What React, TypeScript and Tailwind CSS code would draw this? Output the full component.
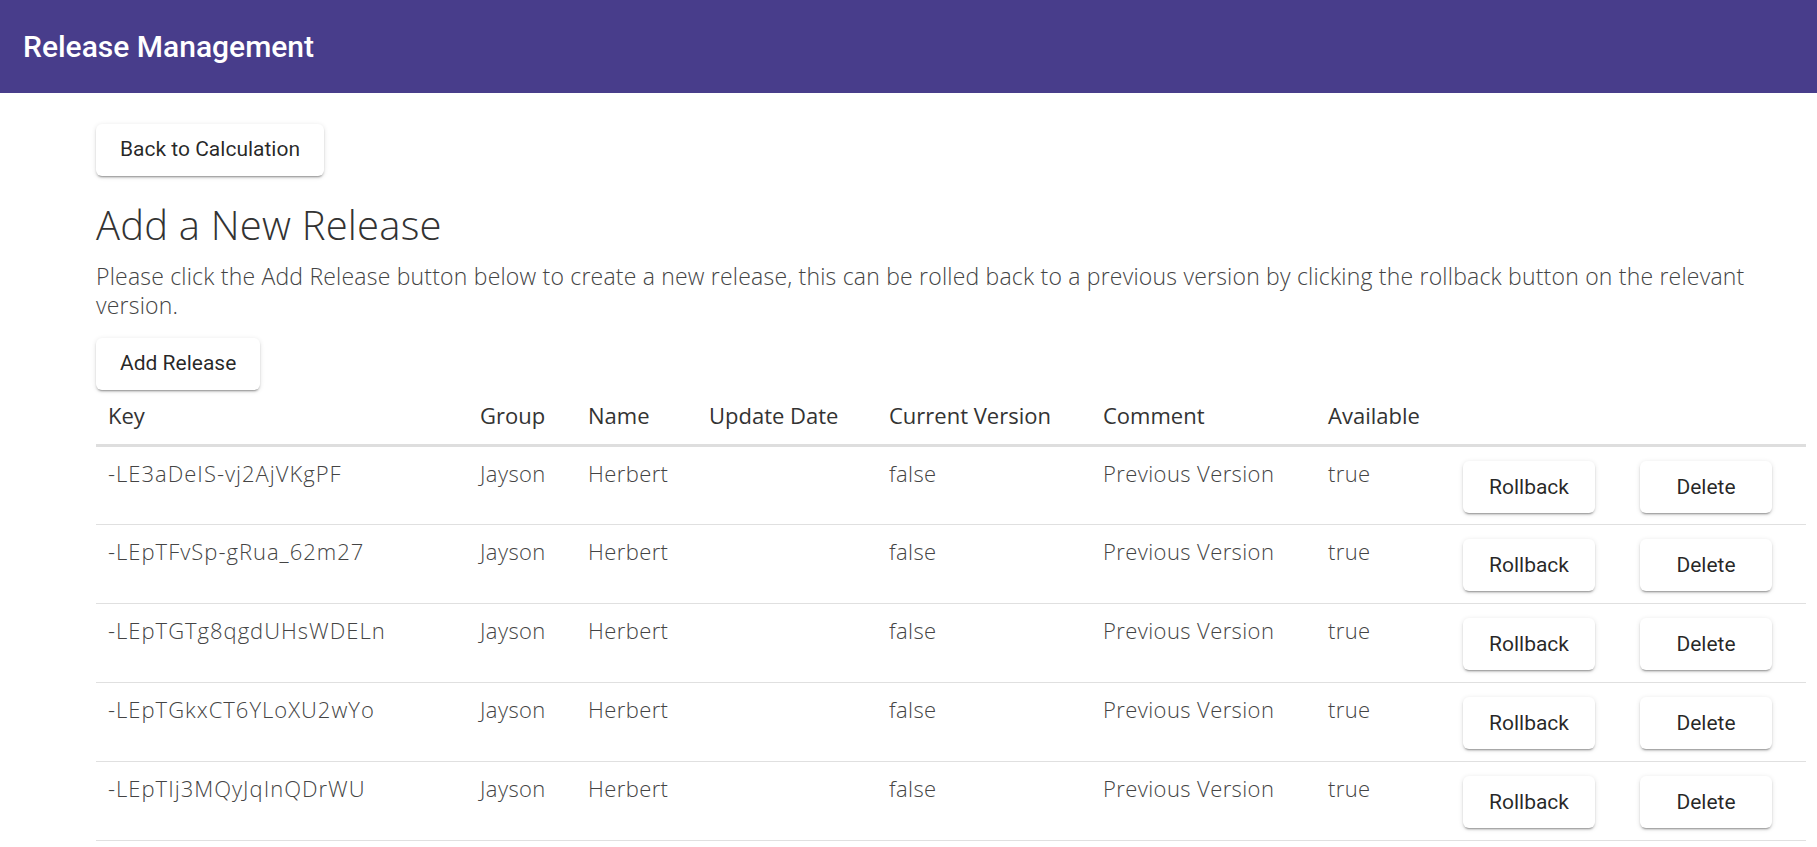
import {FC} from 'react';

interface Release { key: string; group: string; name: string; date: string; current: string; comment: string; available: string }

const releases: Release[] = [
  {key: '-LE3aDeIS-vj2AjVKgPF', group: 'Jayson', name: 'Herbert', date: '', current: 'false', comment: 'Previous Version', available: 'true'},
  {key: '-LEpTFvSp-gRua_62m27', group: 'Jayson', name: 'Herbert', date: '', current: 'false', comment: 'Previous Version', available: 'true'},
  {key: '-LEpTGTg8qgdUHsWDELn', group: 'Jayson', name: 'Herbert', date: '', current: 'false', comment: 'Previous Version', available: 'true'},
  {key: '-LEpTGkxCT6YLoXU2wYo', group: 'Jayson', name: 'Herbert', date: '', current: 'false', comment: 'Previous Version', available: 'true'},
  {key: '-LEpTIj3MQyJqInQDrWU', group: 'Jayson', name: 'Herbert', date: '', current: 'false', comment: 'Previous Version', available: 'true'},
];

const btn = 'h-[52px] rounded-[6px] bg-white text-[21px] font-normal text-black/85 shadow-[0px_3px_1px_-2px_rgba(0,0,0,0.2),0px_2px_2px_0px_rgba(0,0,0,0.14),0px_1px_5px_0px_rgba(0,0,0,0.12)] [font-family:Roboto,sans-serif]';

const Button: FC<{label: string; className?: string}> = ({label, className = ''}) => (
  <button className={`${btn} ${className}`} type="button">{label}</button>
);

export default function App() {
  return (
    <div className="min-h-screen bg-white [font-family:'Open_Sans',sans-serif]">
      {/* Top bar */}
      <div className="flex h-[93px] items-center bg-[#483d8b] pl-[23px]">
        <span className="text-[30px] font-medium leading-none text-white [font-family:Roboto,sans-serif]">Release Management</span>
      </div>

      <div className="pl-[96px] pr-[11px]">
        <Button className="mt-[31px] px-[24px]" label="Back to Calculation" />

        <h1 className="mt-[27px] text-[40px] font-light leading-[44px] tracking-[0.2px] text-[#333]">Add a New Release</h1>
        <p className="mt-[15px] max-w-[1710px] text-[23px] font-light leading-[29px] tracking-[0.2px] text-[#444]">
          Please click the Add Release button below to create a new release, this can be rolled back to a previous version by clicking the rollback button on the relevant version.
        </p>
        <Button className="mt-[18px] px-[24px]" label="Add Release" />

        <table className="w-[1710px] table-fixed border-collapse text-left text-[22px] leading-[28px]">
          <colgroup>
            <col className="w-[372px]" /><col className="w-[108px]" /><col className="w-[121px]" /><col className="w-[180px]" />
            <col className="w-[214px]" /><col className="w-[225px]" /><col className="w-[135px]" /><col className="w-[177px]" /><col className="w-[178px]" />
          </colgroup>
          <thead>
            <tr className="border-b-[3px] border-[#dedede] text-[#333]">
              {['Key', 'Group', 'Name', 'Update Date', 'Current Version', 'Comment', 'Available', '', ''].map((h, i) => (
                <th className="h-[55px] whitespace-nowrap px-[12px] pt-[11px] align-top font-normal" key={i}>{h}</th>
              ))}
            </tr>
          </thead>
          <tbody>
            {releases.map(r => (
              <tr className="h-[79px] border-b border-[#e0e0e0] font-light tracking-[0.4px] text-[#444]" key={r.key}>
                <td className="px-[12px] pt-[12px] align-top tracking-[1px]">{r.key}</td>
                <td className="px-[12px] pt-[12px] align-top">{r.group}</td>
                <td className="px-[12px] pt-[12px] align-top">{r.name}</td>
                <td className="px-[12px] pt-[12px] align-top">{r.date}</td>
                <td className="px-[12px] pt-[12px] align-top">{r.current}</td>
                <td className="whitespace-nowrap px-[12px] pt-[12px] align-top">{r.comment}</td>
                <td className="px-[12px] pt-[12px] align-top">{r.available}</td>
                <td className="px-[12px] pt-[14px] align-top"><Button className="w-[132px] tracking-normal" label="Rollback" /></td>
                <td className="px-[12px] pt-[14px] align-top"><Button className="w-[132px] tracking-normal" label="Delete" /></td>
              </tr>
            ))}
          </tbody>
        </table>
      </div>
    </div>
  );
}
